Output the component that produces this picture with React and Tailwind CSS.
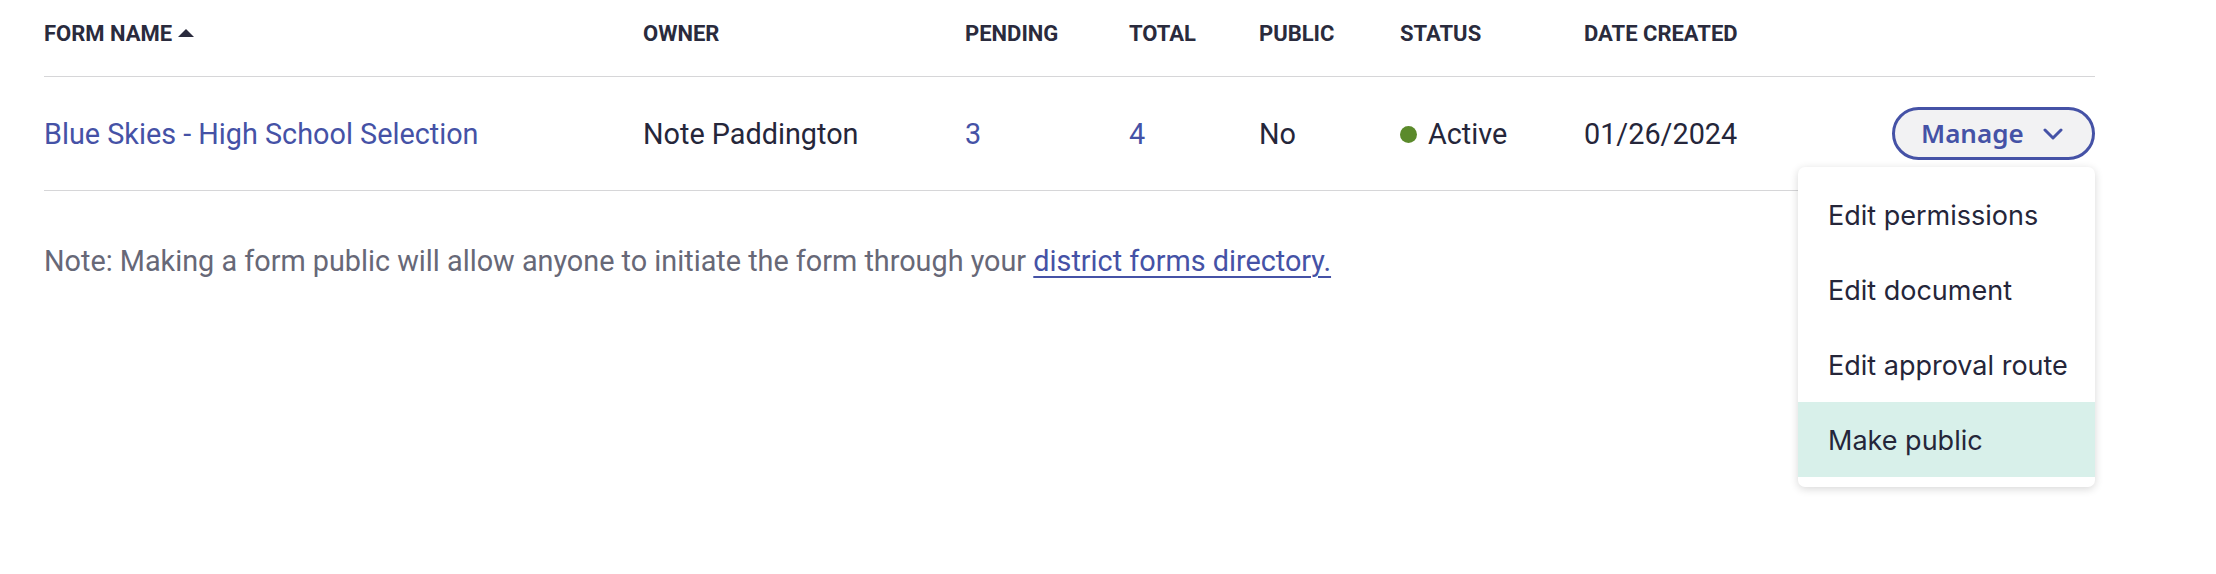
import React from "react";

const cols = "grid grid-cols-[599px_322px_164px_130px_141px_184px_1fr_auto]";

function Chevron() {
  return (
    <svg width="20" height="12" viewBox="0 0 20 12" fill="none" className="shrink-0">
      <path d="M2 2l8 8 8-8" stroke="#4552a6" strokeWidth="3" strokeLinecap="round" strokeLinejoin="round" />
    </svg>
  );
}

const menuItems = ["Edit permissions", "Edit document", "Edit approval route", "Make public"];

export default function App() {
  return (
    <div className="w-[2216px] h-[574px] bg-white font-['Roboto',sans-serif] overflow-hidden">
      <div className="ml-[44px] w-[2051px]">
        {/* header */}
        <div className={`${cols} pt-[22px] pb-[30px] border-b border-[#d6d6d8] text-[22px] leading-[24px] font-bold text-[#2a2b3d] uppercase`}>
          <div className="flex items-center gap-[6px]">
            FORM NAME
            <svg width="16" height="8" viewBox="0 0 16 8" className="mb-[3px]">
              <path d="M8 0L16 8H0z" fill="#2a2b3d" />
            </svg>
          </div>
          <div>OWNER</div>
          <div>PENDING</div>
          <div>TOTAL</div>
          <div>PUBLIC</div>
          <div>STATUS</div>
          <div>DATE CREATED</div>
          <div />
        </div>

        {/* row */}
        <div className={`${cols} relative h-[114px] pt-[2px] items-center border-b border-[#d6d6d8] text-[28.8px] text-[#25263a]`}>
          <a className="text-[#4552a6]">Blue Skies - High School Selection</a>
          <div>Note Paddington</div>
          <a className="text-[#4552a6]">3</a>
          <a className="text-[#4552a6]">4</a>
          <div>No</div>
          <div className="flex items-center gap-[11px]">
            <span className="w-[17px] h-[17px] rounded-full bg-[#5b8a2b]" />
            Active
          </div>
          <div>01/26/2024</div>
          <div className="flex justify-end -mt-[2px]">
            <button className="h-[53px] w-[203px] rounded-full border-[3px] border-[#4552a6] bg-[#f2f2f3] pl-[26px] pr-[29px] flex items-center justify-between font-['Noto_Sans',sans-serif] font-semibold text-[26px] text-[#4552a6]">
              <span className="leading-none pb-[2px]">Manage</span>
              <Chevron />
            </button>
          </div>

          <div className="absolute right-0 top-[90px] w-[297px] rounded-[7px] bg-white py-[10px] shadow-[0_2px_8px_rgba(0,0,0,0.16)] font-['Inter',sans-serif] text-[27px] text-[#25263a] z-10">
            {menuItems.map((m) => (
              <div
                key={m}
                className={`h-[75px] flex items-center pl-[30px] pt-[3px] ${m === "Make public" ? "bg-[#d8f0ea]" : ""}`}
              >
                {m}
              </div>
            ))}
          </div>
        </div>

        {/* note */}
        <p className="mt-[52px] text-[28.8px] leading-[36px] text-[#676877]">
          Note: Making a form public will allow anyone to initiate the form through your{" "}
          <a className="text-[#4552a6] underline decoration-2 underline-offset-[5px]">district forms directory.</a>
        </p>
      </div>
    </div>
  );
}
